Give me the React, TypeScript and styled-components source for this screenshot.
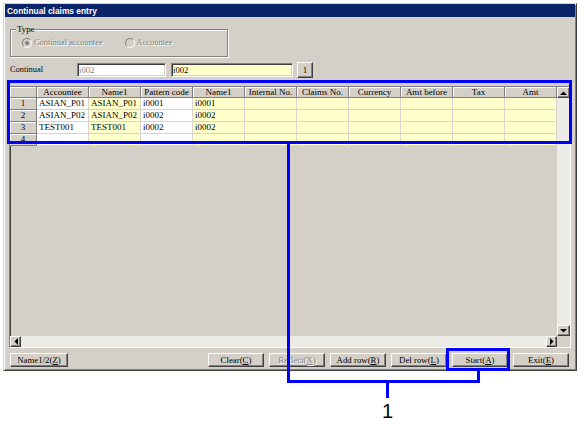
import React from 'react'
import styled, { createGlobalStyle, css } from 'styled-components'

const GlobalStyle = createGlobalStyle`
  html, body {
    margin: 0;
    padding: 0;
    background: #ffffff;
  }
  body {
    font-family: "Liberation Serif", "Times New Roman", serif;
    font-size: 9px;
    color: #000000;
  }
`

const FACE = '#d4d0c8'
const YELLOW = '#ffffcc'

const raised = css`
  box-sizing: border-box;
  background: ${FACE};
  border: 1px solid;
  border-color: #ffffff #404040 #404040 #ffffff;
  box-shadow: inset -1px -1px 0 #808080, inset 1px 1px 0 ${FACE};
`

const sunken = css`
  box-sizing: border-box;
  border: 1px solid;
  border-color: #808080 #ffffff #ffffff #808080;
  box-shadow: inset 1px 1px 0 #404040, inset -1px -1px 0 ${FACE};
`

const Page = styled.div`
  position: relative;
  width: 581px;
  height: 428px;
  box-sizing: border-box;
  padding: 3px 0 0 3px;
  overflow: hidden;
`

const Window = styled.div`
  width: 574px;
  height: 368px;
  box-sizing: border-box;
  display: flex;
  flex-direction: column;
  background: ${FACE};
  border: 1px solid;
  border-color: ${FACE} #404040 #404040 ${FACE};
  box-shadow: inset 1px 1px 0 #ffffff, inset -1px -1px 0 #808080;
`

const TitleBar = styled.div`
  height: 13px;
  margin: 0 1px;
  padding-left: 2px;
  display: flex;
  align-items: center;
  background: #0a246a;
  color: #ffffff;
  font-family: "Liberation Sans", Arial, sans-serif;
  font-weight: bold;
  font-size: 8.4px;
`

const Body = styled.div`
  flex: 1;
  display: flex;
  flex-direction: column;
  padding: 0 4px 0 5px;
`

const GroupBox = styled.fieldset`
  box-sizing: border-box;
  width: 218px;
  height: 32px;
  margin: 8px 0 0 1px;
  padding: 0 0 0 11px;
  border: 1px solid #808080;
  box-shadow: inset 1px 1px 0 #ffffff, 1px 1px 0 #ffffff;
  min-inline-size: 0;
`

const Legend = styled.legend`
  margin-left: -6px;
  padding: 0 1px;
  font-size: 8.8px;
  line-height: 9px;
  background: ${FACE};
`

const RadioRow = styled.div`
  display: flex;
  align-items: center;
  gap: 22px;
  margin-top: 4px;
  height: 10px;
`

const RadioOption = styled.label`
  display: flex;
  align-items: center;
  gap: 2px;
  font-size: 8.4px;
  color: #808080;
  text-shadow: 1px 1px 0 #ffffff;
  line-height: 10px;
`

const RadioDot = styled.span<{ $checked?: boolean }>`
  position: relative;
  width: 10px;
  height: 10px;
  box-sizing: border-box;
  border-radius: 50%;
  border: 1px solid;
  border-color: #808080 #ffffff #ffffff #808080;
  background: ${FACE};
  &::after {
    content: '';
    display: ${({ $checked }) => ($checked ? 'block' : 'none')};
    position: absolute;
    left: 2px;
    top: 2px;
    width: 4px;
    height: 4px;
    border-radius: 50%;
    background: #808080;
  }
`

const FieldRow = styled.div`
  display: flex;
  align-items: center;
  height: 16px;
  margin: 5px 0 0 1px;
`

const FieldLabel = styled.span`
  width: 67px;
  font-size: 8.4px;
  line-height: 14px;
`

const TextBox = styled.input<{ $w: number; $bg?: string; $dim?: boolean }>`
  ${sunken};
  width: ${({ $w }) => $w}px;
  height: 14px;
  margin: 0 5px 0 0;
  padding: 0 1px;
  font-family: inherit;
  font-size: 8.6px;
  background: ${({ $bg }) => $bg || '#ffffff'};
  color: ${({ $dim }) => ($dim ? '#808080' : '#000000')};
  outline: none;
`

const SmallButton = styled.div`
  ${raised};
  width: 16px;
  height: 16px;
  margin-left: -1px;
  display: flex;
  align-items: center;
  justify-content: center;
  line-height: 9px;
`

const GridFrame = styled.div`
  ${sunken};
  margin-top: 8px;
  width: 562px;
  height: 262px;
  display: grid;
  grid-template-columns: 547px 13px;
  grid-template-rows: 249px 11px;
  background: ${FACE};
`

const Viewport = styled.div`
  display: grid;
  grid-template-columns: 27px repeat(10, 52px);
  grid-auto-rows: 12px;
  grid-template-rows: 11px;
  align-content: start;
  overflow: hidden;
`

const HeaderCell = styled.div`
  box-sizing: border-box;
  background: ${FACE};
  border-right: 1px solid #808080;
  border-bottom: 1px solid #808080;
  box-shadow: inset 1px 1px 0 #ffffff;
  display: flex;
  align-items: center;
  justify-content: center;
  line-height: 9px;
  white-space: nowrap;
  overflow: hidden;
`

const DataCell = styled.div<{ $bg: string }>`
  box-sizing: border-box;
  background: ${({ $bg }) => $bg};
  border-right: 1px solid #d8d5cd;
  border-bottom: 1px solid #d8d5cd;
  padding-left: 2px;
  line-height: 11px;
  white-space: nowrap;
  overflow: hidden;
`

const VScroll = styled.div`
  display: flex;
  flex-direction: column;
  justify-content: space-between;
  background: #ecebe6;
`

const HScroll = styled.div`
  display: flex;
  justify-content: space-between;
  background: #ecebe6;
`

const Corner = styled.div`
  background: ${FACE};
`

const ArrowButton = styled.div<{ $w: number; $h: number }>`
  ${raised};
  width: ${({ $w }) => $w}px;
  height: ${({ $h }) => $h}px;
  display: flex;
  align-items: center;
  justify-content: center;
`

const ButtonBar = styled.div`
  display: flex;
  justify-content: space-between;
  align-items: center;
  height: 14px;
  margin: 5px 3px 0 1px;
`

const ButtonGroup = styled.div`
  display: flex;
  gap: 5px;
`

const PushButton = styled.div<{ $w: number; $disabled?: boolean }>`
  ${raised};
  width: ${({ $w }) => $w}px;
  height: 14px;
  display: flex;
  align-items: center;
  justify-content: center;
  line-height: 9px;
  font-size: 8.8px;
  white-space: nowrap;
  color: ${({ $disabled }) => ($disabled ? '#808080' : '#000000')};
  text-shadow: ${({ $disabled }) => ($disabled ? '1px 1px 0 #ffffff' : 'none')};
`

const Callout = styled.svg`
  position: absolute;
  left: 0;
  top: 0;
  pointer-events: none;
`

const columns = ['Accountee', 'Name1', 'Pattern code', 'Name1', 'Internal No.', 'Claims No.', 'Currency', 'Amt before', 'Tax', 'Amt']
const whiteCols = [0, 2]

const rows: string[][] = [
  ['ASIAN_P01', 'ASIAN_P01', 'i0001', 'i0001'],
  ['ASIAN_P02', 'ASIAN_P02', 'i0002', 'i0002'],
  ['TEST001', 'TEST001', 'i0002', 'i0002'],
  []
]

function Arrow({ dir }: { dir: 'up' | 'down' | 'left' | 'right' }) {
  const pts = {
    up: '0,4 7,4 3.5,0.5',
    down: '0,0 7,0 3.5,3.5',
    left: '4,0 4,7 0.5,3.5',
    right: '0,0 0,7 3.5,3.5'
  }[dir]
  const horiz = dir === 'left' || dir === 'right'
  return (
    <svg width={horiz ? 4 : 7} height={horiz ? 7 : 4} viewBox={horiz ? '0 0 4 7' : '0 0 7 4'}>
      <polygon points={pts} fill="#000" />
    </svg>
  )
}

function Label({ text, hot }: { text: string; hot: string }) {
  return (
    <span>
      {text}(<u>{hot}</u>)
    </span>
  )
}

export default function App() {
  return (
    <Page>
      <GlobalStyle />
      <Window>
        <TitleBar>Continual claims entry</TitleBar>
        <Body>
          <GroupBox>
            <Legend>Type</Legend>
            <RadioRow>
              <RadioOption>
                <RadioDot $checked />
                Continual accountee
              </RadioOption>
              <RadioOption>
                <RadioDot />
                Accountee
              </RadioOption>
            </RadioRow>
          </GroupBox>

          <FieldRow>
            <FieldLabel>Continual</FieldLabel>
            <TextBox $w={89} $dim readOnly value="i002" />
            <TextBox $w={122} $bg={YELLOW} readOnly value="i002" />
            <SmallButton>1</SmallButton>
          </FieldRow>

          <GridFrame>
            <Viewport>
              <HeaderCell />
              {columns.map((c, i) => (
                <HeaderCell key={i}>{c}</HeaderCell>
              ))}
              {rows.map((r, ri) => (
                <React.Fragment key={ri}>
                  <HeaderCell>{ri + 1}</HeaderCell>
                  {columns.map((_, ci) => (
                    <DataCell key={ci} $bg={whiteCols.includes(ci) ? '#ffffff' : YELLOW}>
                      {r[ci] ?? ''}
                    </DataCell>
                  ))}
                </React.Fragment>
              ))}
            </Viewport>
            <VScroll>
              <ArrowButton $w={13} $h={11}>
                <Arrow dir="up" />
              </ArrowButton>
              <ArrowButton $w={13} $h={11}>
                <Arrow dir="down" />
              </ArrowButton>
            </VScroll>
            <HScroll>
              <ArrowButton $w={11} $h={11}>
                <Arrow dir="left" />
              </ArrowButton>
              <ArrowButton $w={11} $h={11}>
                <Arrow dir="right" />
              </ArrowButton>
            </HScroll>
            <Corner />
          </GridFrame>

          <ButtonBar>
            <PushButton $w={58}>
              <Label text="Name1/2" hot="Z" />
            </PushButton>
            <ButtonGroup>
              <PushButton $w={56}>
                <Label text="Clear" hot="C" />
              </PushButton>
              <PushButton $w={56} $disabled>
                <Label text="Reflect" hot="X" />
              </PushButton>
              <PushButton $w={56}>
                <Label text="Add row" hot="R" />
              </PushButton>
              <PushButton $w={56}>
                <Label text="Del row" hot="L" />
              </PushButton>
              <PushButton $w={56}>
                <Label text="Start" hot="A" />
              </PushButton>
              <PushButton $w={56}>
                <Label text="Exit" hot="E" />
              </PushButton>
            </ButtonGroup>
          </ButtonBar>
        </Body>
      </Window>

      <Callout width={581} height={428} viewBox="0 0 581 428">
        <g fill="none" stroke="#0000ff" strokeWidth={3}>
          <rect x={8.5} y={81.5} width={562} height={61} />
          <rect x={447.5} y={349.5} width={61} height={20} />
          <polyline points="288.5,144 288.5,381.5 478.5,381.5 478.5,371" />
          <line x1={387.5} y1={381.5} x2={387.5} y2={398} />
        </g>
        <text x={387.5} y={418} textAnchor="middle" fontFamily="Liberation Sans, Arial, sans-serif" fontSize={20} fill="#000">
          1
        </text>
      </Callout>
    </Page>
  )
}
